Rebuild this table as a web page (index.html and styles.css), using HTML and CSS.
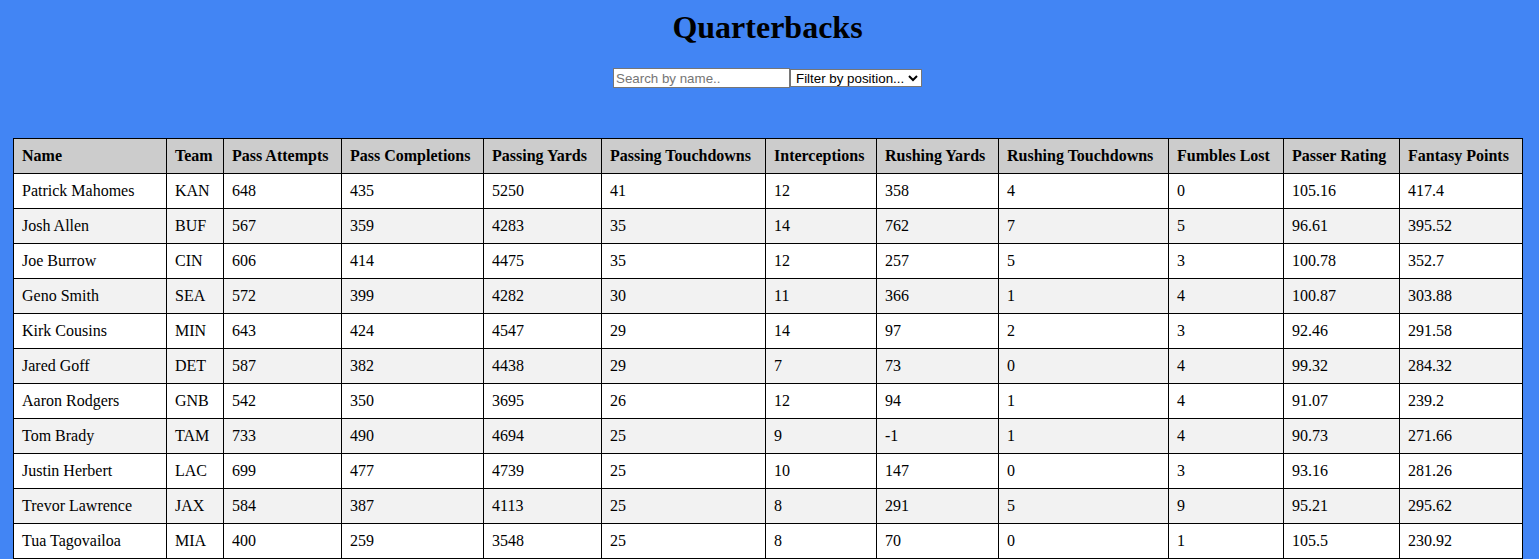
FILE: index.html
```html
<!DOCTYPE html>
<html lang="en">
<head>
<meta charset="utf-8">
<title>Quarterbacks</title>
<link rel="stylesheet" href="styles.css">
</head>
<body>
<div class="page">
  <header class="header">
    <h1 class="title">Quarterbacks</h1>
    <div class="controls"><input class="search" type="text" placeholder="Search by name.."><select class="filter"><option>Filter by position...</option><option>QB</option><option>RB</option><option>WR</option><option>TE</option></select></div>
  </header>
  <table class="stats">
    <colgroup>
      <col class="c-name"><col class="c-team"><col class="c-att"><col class="c-comp"><col class="c-yds"><col class="c-td"><col class="c-int"><col class="c-ryds"><col class="c-rtd"><col class="c-fum"><col class="c-rate"><col class="c-fp">
    </colgroup>
    <thead>
      <tr>
        <th>Name</th><th>Team</th><th>Pass Attempts</th><th>Pass Completions</th><th>Passing Yards</th><th>Passing Touchdowns</th><th>Interceptions</th><th>Rushing Yards</th><th>Rushing Touchdowns</th><th>Fumbles Lost</th><th>Passer Rating</th><th>Fantasy Points</th>
      </tr>
    </thead>
    <tbody>
      <tr><td>Patrick Mahomes</td><td>KAN</td><td>648</td><td>435</td><td>5250</td><td>41</td><td>12</td><td>358</td><td>4</td><td>0</td><td>105.16</td><td>417.4</td></tr>
      <tr><td>Josh Allen</td><td>BUF</td><td>567</td><td>359</td><td>4283</td><td>35</td><td>14</td><td>762</td><td>7</td><td>5</td><td>96.61</td><td>395.52</td></tr>
      <tr><td>Joe Burrow</td><td>CIN</td><td>606</td><td>414</td><td>4475</td><td>35</td><td>12</td><td>257</td><td>5</td><td>3</td><td>100.78</td><td>352.7</td></tr>
      <tr><td>Geno Smith</td><td>SEA</td><td>572</td><td>399</td><td>4282</td><td>30</td><td>11</td><td>366</td><td>1</td><td>4</td><td>100.87</td><td>303.88</td></tr>
      <tr><td>Kirk Cousins</td><td>MIN</td><td>643</td><td>424</td><td>4547</td><td>29</td><td>14</td><td>97</td><td>2</td><td>3</td><td>92.46</td><td>291.58</td></tr>
      <tr><td>Jared Goff</td><td>DET</td><td>587</td><td>382</td><td>4438</td><td>29</td><td>7</td><td>73</td><td>0</td><td>4</td><td>99.32</td><td>284.32</td></tr>
      <tr><td>Aaron Rodgers</td><td>GNB</td><td>542</td><td>350</td><td>3695</td><td>26</td><td>12</td><td>94</td><td>1</td><td>4</td><td>91.07</td><td>239.2</td></tr>
      <tr><td>Tom Brady</td><td>TAM</td><td>733</td><td>490</td><td>4694</td><td>25</td><td>9</td><td>-1</td><td>1</td><td>4</td><td>90.73</td><td>271.66</td></tr>
      <tr><td>Justin Herbert</td><td>LAC</td><td>699</td><td>477</td><td>4739</td><td>25</td><td>10</td><td>147</td><td>0</td><td>3</td><td>93.16</td><td>281.26</td></tr>
      <tr><td>Trevor Lawrence</td><td>JAX</td><td>584</td><td>387</td><td>4113</td><td>25</td><td>8</td><td>291</td><td>5</td><td>9</td><td>95.21</td><td>295.62</td></tr>
      <tr><td>Tua Tagovailoa</td><td>MIA</td><td>400</td><td>259</td><td>3548</td><td>25</td><td>8</td><td>70</td><td>0</td><td>1</td><td>105.5</td><td>230.92</td></tr>
    </tbody>
  </table>
</div>
</body>
</html>
```
FILE: styles.css
```css
html, body {
  margin: 0;
  padding: 0;
  height: 559px;
  overflow: hidden;
  background: #4285f4;
}

body {
  font-family: "Liberation Serif", "Times New Roman", serif;
  color: #000;
}

.page {
  width: 1535px;
}

.header {
  padding-top: 9px;
  text-align: center;
}

.title {
  margin: 0;
  font-size: 32px;
  line-height: 37px;
  font-weight: bold;
}

.controls {
  margin-top: 22px;
  display: flex;
  justify-content: center;
  align-items: center;
  height: 20px;
}

.search {
  box-sizing: border-box;
  width: 177px;
  height: 20px;
  margin: 0;
  padding: 1px 2px;
  border: 1px solid #767676;
  background: #fff;
  font-family: "Liberation Sans", Arial, sans-serif;
  font-size: 13.33px;
  color: #000;
  outline: none;
}

.search::placeholder {
  color: #757575;
}

.filter {
  box-sizing: border-box;
  width: 132px;
  height: 18px;
  margin: 0;
  padding: 0 0 0 1px;
  border: 1px solid #767676;
  border-radius: 0;
  background: #fff;
  font-family: "Liberation Sans", Arial, sans-serif;
  font-size: 13.33px;
  color: #000;
}

.stats {
  margin: 50px 0 0 13px;
  width: 1509px;
  table-layout: fixed;
  border-collapse: collapse;
  background: #fff;
  font-size: 16px;
}

.c-name { width: 153px; }
.c-team { width: 57px; }
.c-att  { width: 118px; }
.c-comp { width: 142px; }
.c-yds  { width: 118px; }
.c-td   { width: 164px; }
.c-int  { width: 111px; }
.c-ryds { width: 122px; }
.c-rtd  { width: 170px; }
.c-fum  { width: 115px; }
.c-rate { width: 116px; }
.c-fp   { width: 123px; }

.stats th,
.stats td {
  border: 1px solid #000;
  padding: 8px;
  text-align: left;
  line-height: 18px;
  white-space: nowrap;
  overflow: hidden;
}

.stats th {
  background: #cccccc;
  font-weight: bold;
}

.stats tbody tr:nth-child(even) td {
  background: #f2f2f2;
}
```
